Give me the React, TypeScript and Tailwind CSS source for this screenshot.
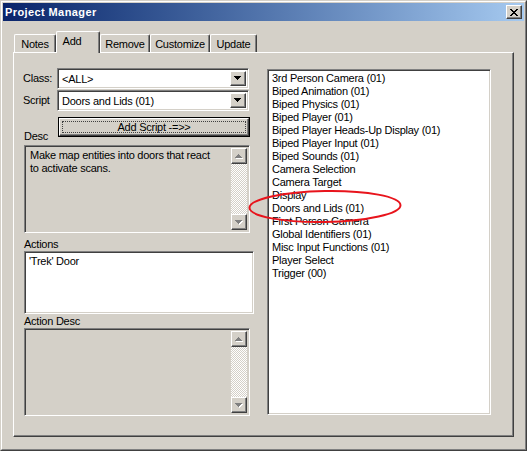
import React from 'react';

const raised =
  'border border-t-white border-l-white border-r-[#404040] border-b-[#404040] shadow-[inset_-1px_-1px_0_#808080]';
const sunken =
  'border border-t-[#808080] border-l-[#808080] border-r-white border-b-white shadow-[inset_1px_1px_0_#404040,inset_-1px_-1px_0_#d4d0c8]';

const scripts = [
  '3rd Person Camera (01)',
  'Biped Animation (01)',
  'Biped Physics (01)',
  'Biped Player (01)',
  'Biped Player Heads-Up Display (01)',
  'Biped Player Input (01)',
  'Biped Sounds (01)',
  'Camera Selection',
  'Camera Target',
  'Display',
  'Doors and Lids (01)',
  'First Person Camera',
  'Global Identifiers (01)',
  'Misc Input Functions (01)',
  'Player Select',
  'Trigger (00)',
];

const tabs = [
  { label: 'Notes', w: 'w-[42px]' },
  { label: 'Add', w: 'w-[44px]', active: true },
  { label: 'Remove', w: 'w-[50px]' },
  { label: 'Customize', w: 'w-[60px]' },
  { label: 'Update', w: 'w-[47px]' },
];

function Arrow({ up, disabled }: { up?: boolean; disabled?: boolean }) {
  const rows = [1, 3, 5, 7];
  const order = up ? rows : [...rows].reverse();
  return (
    <svg width="8" height="5" viewBox="0 0 8 5" shapeRendering="crispEdges">
      {disabled &&
        order.map((w, i) => (
          <rect key={'s' + i} x={(7 - w) / 2 + 1} y={i + 1} width={w} height={1} fill="#ffffff" />
        ))}
      {order.map((w, i) => (
        <rect key={i} x={(7 - w) / 2} y={i} width={w} height={1} fill={disabled ? '#808080' : '#000000'} />
      ))}
    </svg>
  );
}

function ScrollBar() {
  return (
    <div className="flex flex-col w-[16px] h-full">
      <div className={`w-[16px] h-[16px] bg-[#d4d0c8] flex items-center justify-center ${raised}`}>
        <Arrow up disabled />
      </div>
      <div className="flex-1 bg-[repeating-conic-gradient(#ffffff_0%_25%,#d4d0c8_0%_50%)] bg-[length:2px_2px]" />
      <div className={`w-[16px] h-[16px] bg-[#d4d0c8] flex items-center justify-center ${raised}`}>
        <Arrow disabled />
      </div>
    </div>
  );
}

function Combo({ value }: { value: string }) {
  return (
    <div className={`w-[192px] h-[21px] bg-white flex items-stretch p-[2px] ${sunken}`}>
      <div className="flex-1 pl-[2px] leading-[17px] text-black">{value}</div>
      <div className={`w-[16px] bg-[#d4d0c8] flex items-center justify-center ${raised}`}>
        <Arrow />
      </div>
    </div>
  );
}

export default function App() {
  return (
    <div className="relative w-[527px] h-[451px] bg-[#d4d0c8] border border-t-[#d4d0c8] border-l-[#d4d0c8] border-r-[#404040] border-b-[#404040] font-['Liberation_Sans',Arial,sans-serif] text-[11px] tracking-[-0.25px] text-black select-none">
      <div className="flex flex-col h-full border border-t-white border-l-white border-r-[#808080] border-b-[#808080] p-[1px]">
        {/* title bar */}
        <div className="h-[18px] flex items-center justify-between bg-linear-to-r from-[#0a246a] to-[#a6caf0] pl-[2px] pr-[2px]">
          <span className="text-white font-bold text-[11px] tracking-[0.4px]">Project Manager</span>
          <div className={`w-[16px] h-[14px] bg-[#d4d0c8] flex items-center justify-center ${raised}`}>
            <svg width="8" height="7" viewBox="0 0 8 7" shapeRendering="crispEdges">
              <path d="M0 0h2v1h-2zM6 0h2v1h-2zM1 1h2v1h-2zM5 1h2v1h-2zM2 2h4v1h-4zM3 3h2v1h-2zM2 4h4v1h-4zM1 5h2v1h-2zM5 5h2v1h-2zM0 6h2v1h-2zM6 6h2v1h-2z" fill="#000" />
            </svg>
          </div>
        </div>

        {/* body */}
        <div className="flex-1 flex flex-col px-[10px] pt-[10px] pb-[11px]">
          {/* tabs */}
          <div className="h-[21px] flex items-end pl-[1px]">
            {tabs.map((t) =>
              t.active ? (
                <div
                  key={t.label}
                  className={`${t.w} h-[22px] -mb-[1px] relative z-10 bg-[#d4d0c8] rounded-t-[2px] border-t border-l border-r border-t-white border-l-white border-r-[#404040] shadow-[inset_-1px_0_0_#808080] flex items-start justify-center pt-[3px] pr-[12px] leading-[13px]`}
                >
                  {t.label}
                </div>
              ) : (
                <div
                  key={t.label}
                  className={`${t.w} h-[18px] rounded-t-[2px] border-t border-l border-r border-t-white border-l-white border-r-[#404040] shadow-[inset_-1px_0_0_#808080] flex items-start justify-center pt-[3px] leading-[13px]`}
                >
                  {t.label}
                </div>
              )
            )}
          </div>

          {/* panel */}
          <div className="flex-1 flex border border-t-white border-l-white border-r-[#404040] border-b-[#404040] shadow-[inset_-1px_-1px_0_#808080] pl-[9px] pt-[15px]">
            {/* left column */}
            <div className="w-[231px] flex flex-col">
              <div className="flex items-center h-[21px]">
                <span className="w-[34px]">Class:</span>
                <Combo value="<ALL>" />
              </div>
              <div className="flex items-center h-[21px] mt-[1px]">
                <span className="w-[34px]">Script</span>
                <Combo value="Doors and Lids (01)" />
              </div>
              <div className="flex items-end h-[20px] mt-[6px]">
                <span className="w-[35px] pl-[1px] -mb-[6px] leading-[13px]">Desc</span>
                <div className="w-[192px] h-[20px] border border-black">
                  <div className={`h-full bg-[#d4d0c8] p-[2px] ${raised}`}>
                    <div className="h-full border border-dotted border-[#404040] flex items-center justify-center leading-[13px]">
                      Add Script -=&gt;&gt;
                    </div>
                  </div>
                </div>
              </div>

              <div className={`ml-[1px] mt-[8px] w-[226px] h-[88px] bg-[#d4d0c8] flex p-[2px] ${sunken}`}>
                <div className="flex-1 pl-[3px] pt-[1px] leading-[13px]">
                  Make map entities into doors that react
                  <br />
                  to activate scans.
                </div>
                <ScrollBar />
              </div>

              <div className="pl-[1px] mt-[4px] h-[14px] leading-[14px]">Actions</div>
              <div className={`ml-[1px] w-[230px] h-[63px] bg-white p-[2px] ${sunken}`}>
                <div className="pl-[2px] pt-[1px] leading-[13px]">'Trek' Door</div>
              </div>

              <div className="pl-[1px] h-[14px] leading-[14px]">Action Desc</div>
              <div className={`ml-[1px] w-[226px] h-[88px] bg-[#d4d0c8] flex justify-end p-[2px] ${sunken}`}>
                <ScrollBar />
              </div>
            </div>

            {/* script list */}
            <div className={`ml-[13px] mt-[1px] w-[224px] h-[346px] bg-white p-[2px] ${sunken}`}>
              <div className="flex flex-col pl-[2px]">
                {scripts.map((s) => (
                  <div key={s} className="leading-[13px] whitespace-nowrap">
                    {s}
                  </div>
                ))}
              </div>
            </div>
          </div>
        </div>
      </div>

      {/* red annotation ring */}
      <svg
        className="absolute left-[247px] top-[188px] pointer-events-none"
        width="154"
        height="35"
        viewBox="0 0 154 35"
      >
        <ellipse cx="77" cy="17.5" rx="75.5" ry="15.5" fill="none" stroke="#e8141c" strokeWidth="2" transform="rotate(-1 77 17.5)" />
      </svg>
    </div>
  );
}
